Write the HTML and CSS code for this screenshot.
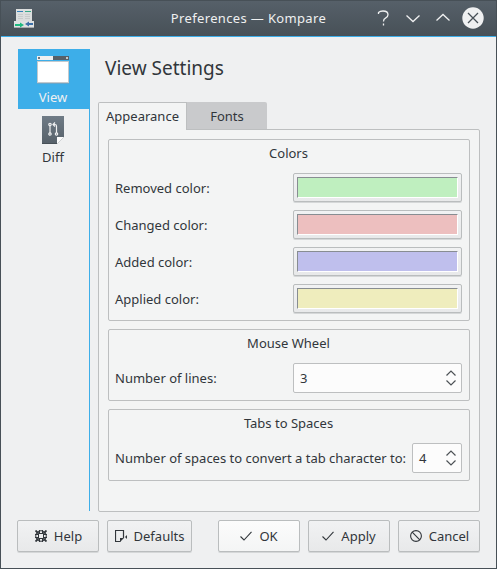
FILE: index.html
```html
<!DOCTYPE html>
<html lang="en">
<head>
<meta charset="utf-8">
<title>Preferences — Kompare</title>
<link rel="stylesheet" href="styles.css">
</head>
<body>
<div class="window">
  <header class="titlebar">
    <svg class="app-icon" width="22" height="22" viewBox="0 0 22 22">
      <path d="M3 2h16v12H3z" fill="#dcdede"/>
      <path d="M4 4h6v1H4z" fill="#3580b8"/><path d="M12 4h6v1h-6z" fill="#35a886"/>
      <path d="M5 7.500h5M12 7.500h5M5 9.500h5M12 9.500h5M5 11.500h5M12 11.500h5" stroke="#c8cbcc" fill="none"/>
      <path d="M1 14h20v7H1z" fill="#dfe1e1"/><path d="M1 20h20v1H1z" fill="#a6aaad"/>
      <path d="M2 17h5v-1.500l4 2.500-4 2.500V19H2z" fill="#1eb980"/>
      <path d="M20 16h-4v-1.500L12 17l4 2.500V18h4z" fill="#3b6fa7"/>
    </svg>
    <h1 class="title">Preferences — Kompare</h1>
    <svg class="controls" width="116" height="24" viewBox="0 0 116 24" fill="none" stroke="#eff0f1" stroke-width="1.3">
      <path d="M8.500 8V6.500Q10 5 13 5q5 0 5 3.800 0 2.200-2.500 3.300-2 .9-2 3.400M13.500 17.500v2"/>
      <path d="M36.500 9.500l6.500 6 6.500-6M66.500 14.500l6.500-6 6.500 6"/>
      <circle cx="103" cy="12" r="10.700" fill="#eff0f1" stroke="none"/>
      <path d="M98 7l10 10M108 7L98 17" stroke="#475057"/>
    </svg>
  </header>
  <main class="content">
    <nav class="sidebar">
      <div class="page selected">
        <svg width="32" height="28" viewBox="0 0 32 28">
          <path d="M0 0h16v4H0z" fill="#eff0f1"/><path d="M16 0h16v4H16z" fill="#566069"/>
          <path d="M1 1h2v2H1z" fill="#72797e"/><path d="M29 1h2v2h-2z" fill="#c5c9cb"/>
          <path d="M0 5h32v22H0z" fill="#c3c9cd"/><path d="M1 6h30v20H1z" fill="#fff"/><path d="M0 27h32v1H0z" fill="#67a6ca"/>
        </svg>
        <span>View</span>
      </div>
      <div class="page">
        <svg width="22" height="28" viewBox="0 0 22 28">
          <defs><linearGradient id="slate" x1="0" y1="1" x2="0" y2="0"><stop stop-color="#566069"/><stop offset="1" stop-color="#6f7b86"/></linearGradient></defs>
          <path d="M0 0h22v21l-7 7H0z" fill="url(#slate)"/><path d="M0 27h15v1H0z" fill="#475057"/>
          <path d="M15 21h7l-7 7z" fill="#fcfcfc"/>
          <g fill="none" stroke="#eff0f1" stroke-width="1.2"><path d="M8 10v7M14.500 17v-7q0-1.500-1.500-1.500h-2M13 6.500l-2 2 2 2"/><circle cx="8" cy="8.500" r="1.200"/><circle cx="8" cy="18" r="1.200"/><circle cx="14.500" cy="18" r="1.200"/></g>
        </svg>
        <span>Diff</span>
      </div>
    </nav>
    <section class="settings">
      <h2 class="heading">View Settings</h2>
      <div class="tabs"><div class="tab active">Appearance</div><div class="tab inactive">Fonts</div></div>
      <div class="panel">
        <div class="group colors">
          <h3>Colors</h3>
          <div class="row"><span>Removed color:</span><button class="color"><i class="swatch green"></i></button></div>
          <div class="row"><span>Changed color:</span><button class="color"><i class="swatch red"></i></button></div>
          <div class="row"><span>Added color:</span><button class="color"><i class="swatch blue"></i></button></div>
          <div class="row"><span>Applied color:</span><button class="color"><i class="swatch yellow"></i></button></div>
        </div>
        <div class="group">
          <h3>Mouse Wheel</h3>
          <div class="row"><span>Number of lines:</span><div class="spin wide"><span>3</span><svg width="10" height="16" viewBox="0 0 10 16"><path d="M.5 5.500L5 1l4.500 4.500M.5 10.500L5 15l4.500-4.500"/></svg></div></div>
        </div>
        <div class="group">
          <h3>Tabs to Spaces</h3>
          <div class="row"><span class="long">Number of spaces to convert a tab character to:</span><div class="spin"><span>4</span><svg width="10" height="16" viewBox="0 0 10 16"><path d="M.5 5.500L5 1l4.500 4.500M.5 10.500L5 15l4.500-4.500"/></svg></div></div>
        </div>
      </div>
    </section>
  </main>
  <footer class="actions">
    <button class="btn help"><svg width="12" height="12" viewBox="0 0 12 12" fill="none" stroke="#31363b"><circle cx="6" cy="6" r="5.300"/><path d="M3.500 3.500h5v5h-5zM4.500 0v3.500M7.500 0v3.500M4.500 8.500V12M7.500 8.500V12M0 4.500h3.500M0 7.500h3.500M8.500 4.500H12M8.500 7.500H12"/><path d="M.5.500l3 3M11.500.500l-3 3M.5 11.500l3-3M11.500 11.500l-3-3" stroke-width="1.800"/></svg><span>Help</span></button>
    <button class="btn defaults"><svg width="13" height="12" viewBox="0 0 13 12"><path d="M5.500 11.500h-5V.5h8V8" fill="none" stroke="#31363b" stroke-width="1.2"/><path d="M5 12V8h4z" fill="#31363b"/><path d="M10 7l2-2v4z" fill="#31363b"/></svg><span>Defaults</span></button>
    <button class="btn ok"><svg width="12" height="10" viewBox="0 0 12 10"><path d="M.5 5.500l3.500 3.500L11.500.800" fill="none" stroke="#31363b" stroke-width="1.100"/></svg><span>OK</span></button>
    <button class="btn"><svg width="12" height="10" viewBox="0 0 12 10"><path d="M.5 5.500l3.500 3.500L11.500.800" fill="none" stroke="#31363b" stroke-width="1.100"/></svg><span>Apply</span></button>
    <button class="btn cancel"><svg width="12" height="12" viewBox="0 0 12 12" fill="none" stroke="#31363b" stroke-width="1.100"><circle cx="6" cy="6" r="5.400"/><path d="M2.200 2.200l7.600 7.600"/></svg><span>Cancel</span></button>
  </footer>
</div>
</body>
</html>
```
FILE: styles.css
```css
* { box-sizing: border-box; }
body { margin: 0; font: 13px/18px "Noto Sans", sans-serif; color: #31363b; }
h1, h2, h3 { margin: 0; font-weight: 400; }
button { font: inherit; color: inherit; margin: 0; }
svg { display: block; flex: none; }
.window { width: 497px; height: 569px; background: #eff0f1; border: solid #475057; border-width: 0 1px 1px; }
.titlebar { height: 37px; display: flex; align-items: center; padding: 0 10px 1px 12px; background: linear-gradient(#566069, #475057); border-top: 1px solid #475057; border-bottom: 1px solid #3daee9; color: #eff0f1; }
.title { flex: 1; font-size: 13px; text-align: center; letter-spacing: .35px; padding-left: 93px; }
.controls { margin-left: 1px; }
.content { display: flex; height: 475px; margin: 12px 16px 0 17px; }
.sidebar { width: 72px; border-right: 1px solid #3daee9; height: 462px; }
.page { height: 60px; width: 70px; display: flex; flex-direction: column; align-items: center; padding-top: 7px; }
.page span { margin-top: 4px; }
.selected { width: 72px; background: #3daee9; color: #eff0f1; padding-right: 2px; }
.settings { width: 382px; margin-left: 8px; }
.heading { font-size: 19px; line-height: 27px; height: 53px; padding: 6px 0 0 7px; }
.tabs { display: flex; height: 27px; }
.tab { text-align: center; line-height: 18px; padding-top: 5px; }
.active { width: 89px; height: 28px; padding-top: 4px; background: #f3f4f4; border: 1px solid #bdbfc0; border-bottom: 0; border-radius: 2px 0 0; z-index: 1; }
.inactive { width: 80px; background: #c9cacc; border-radius: 0 2px 0 0; }
.panel { height: 383px; border: 1px solid #bdbfc0; border-radius: 0 2px 2px; background: #f3f4f4; padding: 9px; display: flex; flex-direction: column; gap: 8px; }
.group { border: 1px solid #bdbfc0; border-radius: 2px; padding: 4px 7px 7px 6px; }
.group h3 { height: 29px; font-size: 13px; text-align: center; }
.row { display: flex; align-items: center; justify-content: space-between; height: 30px; }
.colors .row { height: 29px; margin-bottom: 8px; }
.colors .row:last-child { margin-bottom: 0; }
.colors .row span { padding-top: 1px; }
.long { white-space: nowrap; }
.color { width: 169px; height: 29px; padding: 3px; border: 1px solid #babdbe; border-radius: 2px; background: linear-gradient(#f1f2f3, #e8e9ea); box-shadow: 0 1px 0 #d5d7d8; }
.swatch { display: block; width: 161px; height: 21px; border: 1px solid #fff; border-top-color: #888d92; border-left-color: #888d92; }
.green { background: #bfefbf; }
.red { background: #edbfbf; }
.blue { background: #bfbfed; }
.yellow { background: #efedbd; }
.spin { width: 50px; height: 30px; display: flex; align-items: center; justify-content: space-between; padding: 0 5px 0 6px; border: 1px solid #bdbfc0; border-radius: 2px; background: #fcfcfc; }
.wide { width: 169px; }
.spin svg { fill: none; stroke: #4d5256; stroke-width: 1.2; }
.actions { display: flex; gap: 8px; margin: -4px 0 0 16px; }
.btn { width: 82px; height: 32px; display: flex; align-items: center; justify-content: center; gap: 7px; padding: 0; border: 1px solid #babdbe; border-radius: 2px; background: linear-gradient(#f1f2f3, #e8e9ea); box-shadow: 0 1px 0 #d5d7d8; }
.help { padding-left: 1px; }
.cancel { padding-left: 1px; }
.defaults { width: 85px; gap: 6px; }
.ok { margin-left: 18px; background: linear-gradient(#fcfcfc, #f4f5f5); }
```
